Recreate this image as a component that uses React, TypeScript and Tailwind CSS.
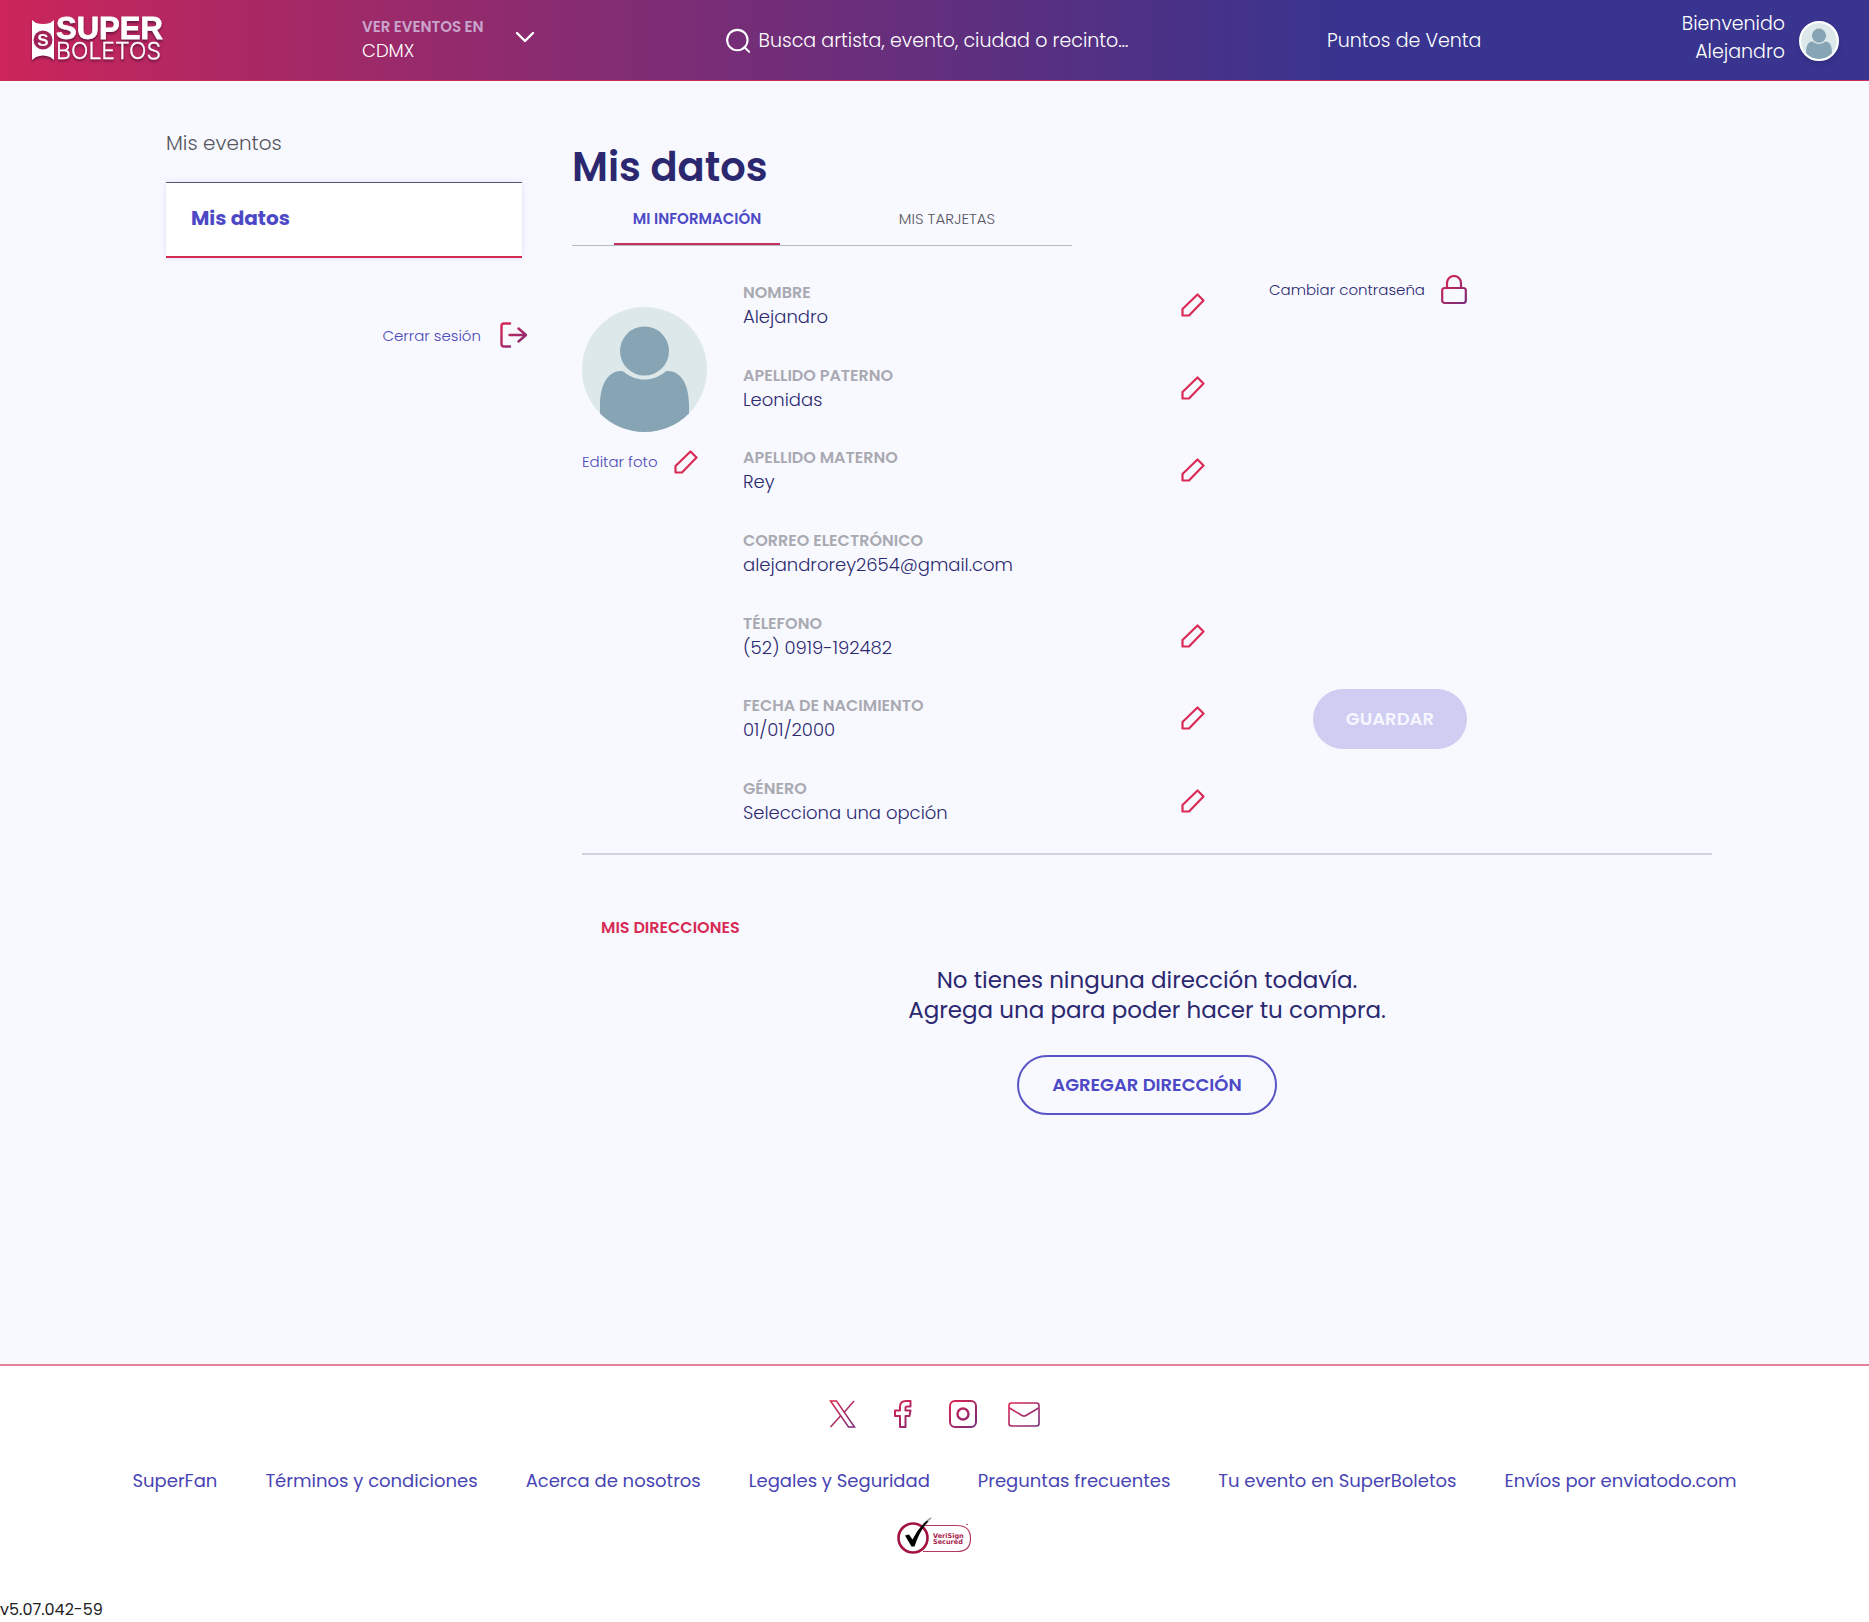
import React from "react";

const GRADIENT_ID = "brand-gradient";

function BrandGradient() {
  return (
    <svg width="0" height="0" className="absolute" aria-hidden="true">
      <defs>
        <linearGradient id={GRADIENT_ID} gradientUnits="userSpaceOnUse" x1="0" y1="0" x2="28" y2="32">
          <stop offset="0" stopColor="#e02550" />
          <stop offset="1" stopColor="#6b2d7e" />
        </linearGradient>
      </defs>
    </svg>
  );
}

function Logo() {
  return (
    <svg width="140" height="66" viewBox="0 -13 140 66" role="img" aria-label="SuperBoletos" className="drop-shadow-[0_2px_1px_rgba(60,10,50,0.6)]">
      <path d="M0 0 L4 3 Q11 5 18 3 L22 0 V40 L18 37 Q11 34 4 37 L0 40 Z" fill="#fff" />
      <circle cx="11" cy="20" r="9.500" fill="#a02258" />
      <text x="11" y="26" textAnchor="middle" fontFamily="Liberation Sans, sans-serif" fontWeight="700" fontSize="17" fill="#fff">S</text>
      <text x="24" y="19" fontFamily="Liberation Sans, sans-serif" fontWeight="700" fontSize="31" fill="#fff" stroke="#fff" strokeWidth="0.800">SUPER</text>
      <text x="24" y="39" fontFamily="Inter, sans-serif" fontWeight="300" fontSize="23" fill="#fff" stroke="#fff" strokeWidth="0.300">BOLETOS</text>
    </svg>
  );
}

function Avatar({ className }: { className: string }) {
  return (
    <svg viewBox="0 0 125 125" className={className} role="img" aria-label="Foto de perfil">
      <defs>
        <clipPath id="avatar-clip">
          <circle cx="62.5" cy="62.5" r="62.5" />
        </clipPath>
      </defs>
      <g clipPath="url(#avatar-clip)">
        <rect width="125" height="125" fill="#dde8eb" />
        <circle cx="62.5" cy="44" r="24.5" fill="#87a4b4" />
        <path d="M18 125 V98 C18 76 27 64 39 64 Q41 64 42 65 C54 75 71 75 83 65 Q84 64 86 64 C98 64 107 76 107 98 V125 Z" fill="#87a4b4" />
      </g>
    </svg>
  );
}

function PencilIcon() {
  return (
    <svg width="24" height="24" viewBox="0 0 24 24" fill="none" stroke="#d92b55" strokeWidth="2.200" strokeLinejoin="round" aria-hidden="true">
      <path d="M16.5 1.5 L22.5 7.5 L8 22.5 H1.5 V16 Z" />
    </svg>
  );
}

function EditButton({ label }: { label: string }) {
  return (
    <button type="button" aria-label={label} className="cursor-pointer">
      <PencilIcon />
    </button>
  );
}

const stroke = `url(#${GRADIENT_ID})`;

function LogoutIcon() {
  return (
    <svg width="28" height="26" viewBox="0 0 28 26" fill="none" stroke={stroke} strokeWidth="2.4" strokeLinecap="round" strokeLinejoin="round" aria-hidden="true">
      <path d="M10 1.5 H4 Q1.5 1.5 1.5 4 V22 Q1.5 24.500 4 24.500 H10" />
      <path d="M9.500 13 H26 M18.500 6.500 L26 13 L18.500 19.500" />
    </svg>
  );
}

function LockIcon() {
  return (
    <svg width="26" height="30" viewBox="0 0 26 30" fill="none" stroke={stroke} strokeWidth="2.200" aria-hidden="true">
      <rect x="1.200" y="13" width="23.600" height="15" rx="2.500" />
      <path d="M6 13 V8 A7 7 0 0 1 20 8 V13" />
    </svg>
  );
}

function XIcon() {
  return (
    <svg width="27" height="28" viewBox="0 0 27 28" fill="none" stroke={stroke} strokeWidth="1.500" aria-hidden="true">
      <path d="M1.500 1 H7.500 L25.500 27 H19.500 Z" />
      <path d="M25 1 L15 12.500 M11.500 16 L1.500 27" />
    </svg>
  );
}

function FacebookIcon() {
  return (
    <svg width="18" height="28" viewBox="0 0 18 28" fill="none" stroke={stroke} strokeWidth="2" strokeLinejoin="round" aria-hidden="true">
      <path d="M16.500 1 H12 Q6 1 6 7 V10.500 H1 V16 H6 V27 H11.500 V16 H15.500 L16.500 10.500 H11.500 V8 Q11.500 6.500 13 6.500 H16.500 Z" />
    </svg>
  );
}

function InstagramIcon() {
  return (
    <svg width="28" height="28" viewBox="0 0 28 28" fill="none" stroke={stroke} strokeWidth="2" aria-hidden="true">
      <rect x="1" y="1" width="26" height="26" rx="5" />
      <circle cx="14" cy="14" r="5.500" strokeWidth="2.400" />
    </svg>
  );
}

function MailIcon() {
  return (
    <svg width="32" height="25" viewBox="0 0 32 25" fill="none" stroke={stroke} strokeWidth="1.600" aria-hidden="true">
      <rect x="1" y="1" width="30" height="23" rx="2.500" />
      <path d="M1.500 6 L14 13.500 Q16 14.600 18 13.500 L30.500 6" />
    </svg>
  );
}

function VerisignBadge() {
  return (
    <svg width="76" height="40" viewBox="0 0 76 40" role="img" aria-label="VeriSign Secured">
      <path d="M26 9.500 H60 Q73.500 9.500 73.500 22.500 Q73.500 35.500 60 35.500 H26" fill="none" stroke="#b23a5e" strokeWidth="1.200" />
      <circle cx="16" cy="22" r="14.500" fill="#fff" stroke="#a3123f" strokeWidth="2.600" />
      <path d="M8 19.500 L12 18.500 L15.500 23.500 Q21 12 30 4.500 L31 5.500 Q22.500 15 17.500 30.500 H14.500 Z" fill="#000" />
      <path d="M26 8.500 L33 2 M28 9.500 L34.500 1.500" stroke="#333" strokeWidth="1" strokeDasharray="1.500 1" />
      <circle cx="70" cy="8.500" r="0.800" fill="#b23a5e" />
      <text x="36" y="21.500" fontFamily="DejaVu Sans, sans-serif" fontWeight="700" fontSize="6.500" fill="#a8214b">VeriSign</text>
      <text x="36" y="28" fontFamily="DejaVu Sans, sans-serif" fontWeight="700" fontSize="6.500" fill="#a8214b">Secured</text>
    </svg>
  );
}

function Header() {
  return (
    <header className="grid h-[81px] grid-cols-[330fr_364fr_601fr_182fr_330fr] items-center border-b border-[#c9305c] bg-[linear-gradient(90deg,#cc255a_0%,#ad2863_12%,#822c73_33%,#553082_57%,#38348f_72%)] pr-[30px] pl-8 text-[19px] font-light text-white">
      <a href="#inicio">
        <Logo />
      </a>
      <button type="button" className="flex w-[173px] cursor-pointer items-start justify-between pb-0.5 text-left">
        <span className="flex flex-col">
          <span className="text-[15px] leading-6 font-semibold text-[#c9a5cc]">VER EVENTOS EN</span>
          <span className="text-lg leading-6">CDMX</span>
        </span>
        <svg width="20" height="12" viewBox="0 0 20 12" fill="none" stroke="#fff" strokeWidth="2.400" strokeLinecap="round" strokeLinejoin="round" className="mt-4" aria-hidden="true">
          <path d="M2 2 L10 10 L18 2" />
        </svg>
      </button>
      <label className="flex items-center gap-2 pt-0.5">
        <svg width="26" height="26" viewBox="0 0 26 26" fill="none" stroke="#fff" strokeWidth="2.200" strokeLinecap="round" aria-hidden="true">
          <circle cx="12" cy="12" r="10.800" />
          <path d="M19.500 19.500 L24.500 24.500" />
        </svg>
        <input
          type="search"
          aria-label="Buscar"
          placeholder="Busca artista, evento, ciudad o recinto…"
          className="w-full bg-transparent outline-none placeholder:text-white placeholder:opacity-100"
        />
      </label>
      <a href="#puntos" className="pt-0.5">Puntos de Venta</a>
      <a href="#perfil" className="flex items-center justify-end gap-3.5 pt-0.5 text-right leading-7">
        <span className="pb-1.5">
          Bienvenido
          <br />
          Alejandro
        </span>
        <Avatar className="size-10 rounded-full border-2 border-white bg-white shadow-md" />
      </a>
    </header>
  );
}

function Sidebar() {
  return (
    <nav aria-label="Mi cuenta" className="flex flex-col pt-12 pr-[50px] pl-[19px] text-xl">
      <a href="#eventos" className="leading-7 font-light text-[#55565f]">
        Mis eventos
      </a>
      <a
        href="#datos"
        aria-current="page"
        className="mt-[25px] flex h-[76px] items-center border-t border-b-2 border-t-[#55566f] border-b-[#d62b52] bg-white px-[25px] pb-1 font-bold text-[#4d49c6] shadow-[0_0_6px_rgba(80,80,220,0.15)]"
      >
        Mis datos
      </a>
      <button type="button" className="mt-16 -mr-1.5 flex cursor-pointer items-center gap-[19px] self-end text-[15px] font-light text-[#4d49b8]">
        Cerrar sesión
        <LogoutIcon />
      </button>
    </nav>
  );
}

const fields = [
  { label: "NOMBRE", value: "Alejandro", editable: true },
  { label: "APELLIDO PATERNO", value: "Leonidas", editable: true },
  { label: "APELLIDO MATERNO", value: "Rey", editable: true },
  { label: "CORREO ELECTRÓNICO", value: "alejandrorey2654@gmail.com", editable: false },
  { label: "TÉLEFONO", value: "(52) 0919-192482", editable: true },
  { label: "FECHA DE NACIMIENTO", value: "01/01/2000", editable: true },
  { label: "GÉNERO", value: "Selecciona una opción", editable: true },
];

function Profile() {
  return (
    <section className="mx-2.5 grid grid-cols-[161px_462px_262px] border-b-2 border-[#d2d2df] pb-[11px]">
      <div className="pt-[61px]">
        <Avatar className="size-[125px]" />
        <button type="button" className="mt-[18px] flex cursor-pointer items-center gap-4 text-[15px] font-light text-[#4d49b8]">
          Editar foto
          <PencilIcon />
        </button>
      </div>
      <dl className="grid min-h-[596px] auto-rows-fr pt-[18px]">
        {fields.map((f) => (
          <div key={f.label} className="flex items-center justify-between">
            <div>
              <dt className="text-base leading-6 font-semibold text-[#a9a9b2]">{f.label}</dt>
              <dd className="text-lg leading-6 font-light text-[#2c2970]">{f.value}</dd>
            </div>
            {f.editable && <EditButton label={`Editar ${f.label.toLowerCase()}`} />}
          </div>
        ))}
      </dl>
      <div className="flex flex-col items-end justify-between pt-[29px] pb-[93px]">
        <button type="button" className="flex cursor-pointer items-center gap-4 text-[15px] font-light text-[#2c2970]">
          Cambiar contraseña
          <LockIcon />
        </button>
        <button type="button" disabled className="h-[60px] rounded-full bg-[#cfcdf2] px-[33px] text-lg font-semibold text-[#f6f6ff]">
          GUARDAR
        </button>
      </div>
    </section>
  );
}

function Addresses() {
  return (
    <section className="flex flex-col items-center pt-[61px]">
      <h2 className="self-start pl-[29px] text-base leading-6 font-semibold text-[#d62b55]">MIS DIRECCIONES</h2>
      <p className="mt-[25px] text-center text-[23px] leading-[30px] text-[#2b2870]">
        No tienes ninguna dirección todavía.
        <br />
        Agrega una para poder hacer tu compra.
      </p>
      <button type="button" className="mt-[30px] h-[60px] cursor-pointer rounded-full border-2 border-[#5a55c4] px-[33px] text-lg font-semibold text-[#4d49c6]">
        AGREGAR DIRECCIÓN
      </button>
    </section>
  );
}

function Footer() {
  const links = [
    "SuperFan",
    "Términos y condiciones",
    "Acerca de nosotros",
    "Legales y Seguridad",
    "Preguntas frecuentes",
    "Tu evento en SuperBoletos",
    "Envíos por enviatodo.com",
  ];
  return (
    <footer className="border-t-2 border-[#e5829a] bg-white">
      <div className="flex items-center justify-center pt-[34px]">
        <a href="#x" aria-label="X" className="mr-[38px]"><XIcon /></a>
        <a href="#facebook" aria-label="Facebook" className="mr-[37px]"><FacebookIcon /></a>
        <a href="#instagram" aria-label="Instagram" className="mr-[31px]"><InstagramIcon /></a>
        <a href="#correo" aria-label="Correo"><MailIcon /></a>
      </div>
      <nav aria-label="Enlaces" className="mt-[39px] flex flex-wrap justify-center gap-x-12 text-lg leading-7 text-[#4744b4]">
        {links.map((l) => (
          <a key={l} href="#enlace">
            {l}
          </a>
        ))}
      </nav>
      <div className="mt-[21px] flex justify-center">
        <VerisignBadge />
      </div>
      <p className="mt-[42px] text-base leading-6 text-[#222]">v5.07.042-59</p>
    </footer>
  );
}

export default function App() {
  return (
    <div className="flex min-h-screen flex-col bg-[#f8f9ff] font-[Poppins,Inter,sans-serif]">
      <BrandGradient />
      <Header />
      <main className="mx-auto grid w-full max-w-[1575px] grow grid-cols-[425px_1fr] pb-56">
        <Sidebar />
        <div className="pt-[62px]">
          <h1 className="text-[40px] leading-[48px] font-semibold text-[#2b2870]">Mis datos</h1>
          <div role="tablist" className="mt-2 flex h-[47px] w-[500px] border-b border-[#b9b9c3] text-[15px]">
            <button type="button" role="tab" aria-selected="true" className="flex flex-1 cursor-pointer justify-center font-semibold text-[#4d49c6]">
              <span className="flex h-full w-2/3 items-center justify-center border-b-2 border-[#c8305c] pb-1 whitespace-nowrap">MI INFORMACIÓN</span>
            </button>
            <button type="button" role="tab" aria-selected="false" className="flex-1 cursor-pointer pb-1.5 font-light text-[#55565f]">
              MIS TARJETAS
            </button>
          </div>
          <Profile />
          <Addresses />
        </div>
      </main>
      <Footer />
    </div>
  );
}
